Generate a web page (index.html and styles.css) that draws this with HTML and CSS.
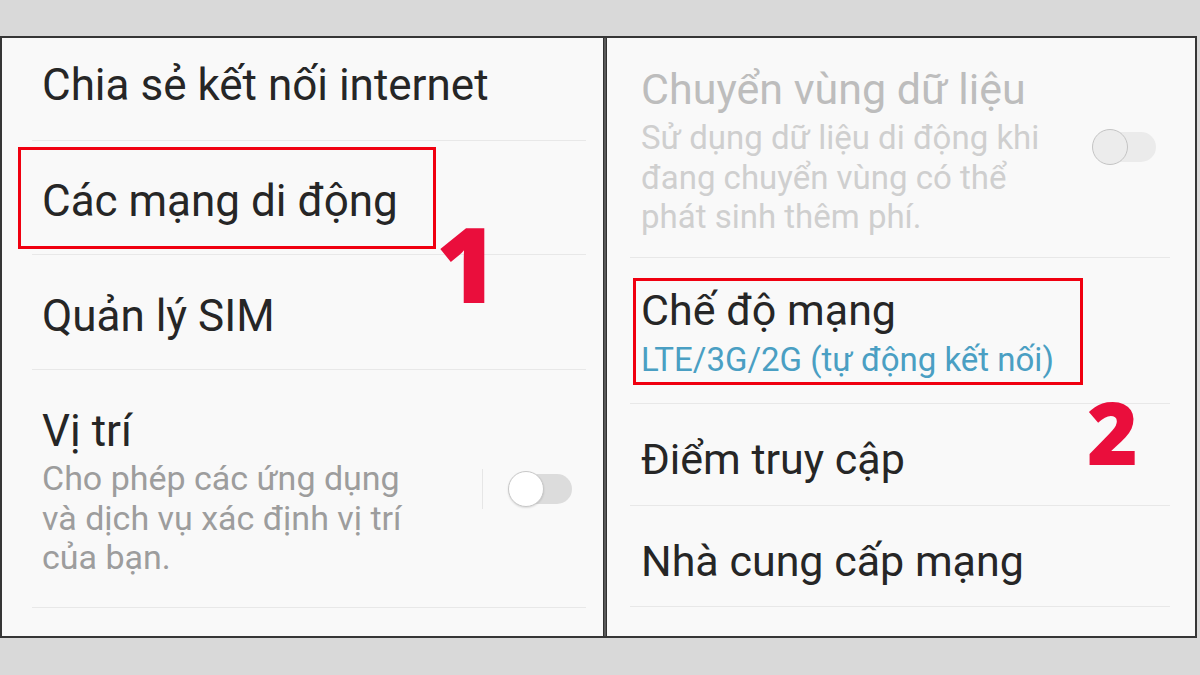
FILE: index.html
```html
<!DOCTYPE html>
<html lang="vi">
<head>
<meta charset="utf-8">
<title>Cài đặt mạng di động</title>
<link rel="stylesheet" href="styles.css">
</head>
<body>
<div class="frame">
  <div class="col col-left">
    <div class="row l1"><div class="title">Chia sẻ kết nối internet</div></div>
    <div class="row l2"><div class="title">Các mạng di động</div></div>
    <div class="row l3"><div class="title">Quản lý SIM</div></div>
    <div class="row l4 with-toggle">
      <div class="text-block tb-left">
        <div class="title">Vị trí</div>
        <div class="sub">Cho phép các ứng dụng<br>và dịch vụ xác định vị trí<br>của bạn.</div>
      </div>
      <div class="toggle-area ta-left">
        <span class="vdiv"></span>
        <span class="switch sw-left"><span class="knob"></span></span>
      </div>
    </div>
  </div>
  <div class="divider"></div>
  <div class="col col-right">
    <div class="row r1 with-toggle">
      <div class="text-block tb-right">
        <div class="title disabled">Chuyển vùng dữ liệu</div>
        <div class="sub disabled">Sử dụng dữ liệu di động khi<br>đang chuyển vùng có thể<br>phát sinh thêm phí.</div>
      </div>
      <div class="toggle-area ta-right">
        <span class="switch sw-right"><span class="knob"></span></span>
      </div>
    </div>
    <div class="row r2">
      <div class="title">Chế độ mạng</div>
      <div class="sub accent">LTE/3G/2G (tự động kết nối)</div>
    </div>
    <div class="row r3"><div class="title">Điểm truy cập</div></div>
    <div class="row r4"><div class="title">Nhà cung cấp mạng</div></div>
  </div>

  <div class="mark mark-1"></div>
  <div class="mark mark-2"></div>
  <div class="num num-1">1</div>
  <div class="num num-2">2</div>
</div>
</body>
</html>
```

FILE: styles.css
```css
* { box-sizing: border-box; }

html, body {
  margin: 0;
  padding: 0;
}

body {
  width: 1200px;
  height: 675px;
  background: #d9d9d9;
  font-family: Roboto, "Noto Sans", "DejaVu Sans", sans-serif;
  overflow: hidden;
}

.frame {
  position: relative;
  margin-top: 36px;
  width: 1197px;
  height: 602px;
  border: 2px solid #363636;
  background: #f9f9f9;
  display: grid;
  grid-template-columns: 601px 4px 1fr;
}

.divider {
  background: #5a5a5a;
  border-left: 1px solid #333;
  border-right: 1px solid #333;
}

.col {
  display: flex;
  flex-direction: column;
  background: #f9f9f9;
}

.row {
  border-bottom: 1px solid #e8e8e8;
}

.col-left .row {
  margin: 0 17px 0 30px;
  padding-left: 10px;
}

.col-right .row {
  margin: 0 25px 0 23px;
  padding-left: 11px;
}

.title {
  font-size: 44px;
  line-height: 52px;
  color: #262626;
  white-space: nowrap;
}

.sub {
  margin-top: 2px;
  font-size: 34px;
  line-height: 39.5px;
  color: #9d9d9d;
  white-space: nowrap;
}

.col-right .title { font-size: 43px; }
.col-right .sub { font-size: 33px; }

.title.disabled { color: #bdbdbd; }
.sub.disabled { color: #cfcfcf; margin-top: 3px; }
.sub.accent { color: #4a9fc3; margin-top: 4px; line-height: 40px; }

/* left rows */
.l1 { height: 103px; padding-top: 21px; }
.l2 { height: 114px; padding-top: 34px; }
.l3 { height: 115px; padding-top: 35px; }
.l4 { height: 238px; padding-top: 35px; }

/* right rows */
.r1 { height: 220px; padding-top: 25px; }
.r2 { height: 146px; padding-top: 26px; }
.r3 { height: 102px; padding-top: 29px; }
.r4 { height: 101px; padding-top: 29px; }

.with-toggle {
  display: flex;
  align-items: flex-start;
}

.tb-left { width: 440px; }
.tb-right { width: 455px; }

.toggle-area {
  display: flex;
  align-items: center;
  height: 40px;
}

.ta-left { margin-top: 64px; }
.ta-right { margin-top: 64px; }

.vdiv {
  width: 1px;
  height: 40px;
  background: #e6e6e6;
}

.switch {
  position: relative;
  display: block;
  width: 60px;
  height: 30px;
  border-radius: 15px;
}

.sw-left {
  margin-left: 29px;
  background: #dcdcdc;
}

.sw-right {
  margin-left: 0;
  background: #ebebeb;
}

.knob {
  position: absolute;
  left: -4px;
  top: -3px;
  width: 36px;
  height: 36px;
  border-radius: 50%;
}

.sw-left .knob {
  background: #ffffff;
  border: 1.5px solid #c8c8c8;
  box-shadow: 0 1px 2px rgba(0,0,0,0.12);
}

.sw-right .knob {
  background: #ececec;
  border: 1.5px solid #c4c4c4;
}

/* red annotation boxes */
.mark {
  position: absolute;
  border: 3px solid #f00010;
}

.mark-1 {
  left: 16px;
  top: 109px;
  width: 418px;
  height: 102px;
}

.mark-2 {
  left: 631px;
  top: 240px;
  width: 450px;
  height: 107px;
}

.num {
  position: absolute;
  font-family: "Open Sans", "Liberation Sans", sans-serif;
  font-weight: 800;
  line-height: 1;
  color: #ea0e3c;
}

.num-1 {
  left: 434px;
  top: 172px;
  font-size: 105px;
}

.num-2 {
  left: 1085px;
  top: 350px;
  font-size: 87px;
}
```
